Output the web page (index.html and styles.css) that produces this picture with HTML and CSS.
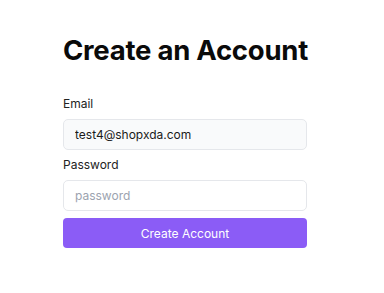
FILE: index.html
```html
<!DOCTYPE html>
<html lang="en">
<head>
    <meta charset="UTF-8">
    <meta name="viewport" content="width=device-width, initial-scale=1.0">
    <title>Create an Account</title>
    <link rel="stylesheet" href="styles.css">
</head>
<body>

    <main class="signup">
        <h1>Create an Account</h1>
        <form class="signup-form">
            <label for="email">Email</label>
            <input type="email" id="email" class="filled" value="test4@shopxda.com">

            <label for="password">Password</label>
            <input type="password" id="password" placeholder="password">

            <button type="submit">Create Account</button>
        </form>
    </main>

</body>
</html>
```

FILE: styles.css
```css
body {
    font-family: Inter, "Noto Sans", sans-serif;
    margin: 0;
    padding: 0;
    background: #ffffff;
    color: #111111;
}
.signup {
    width: 244px;
    padding: 33px 0 0 63px;
}
h1 {
    margin: 0;
    font-size: 27.5px;
    font-weight: 700;
    letter-spacing: -0.25px;
    color: #0a0a0a;
    line-height: 34px;
    white-space: nowrap;
}
.signup-form {
    display: flex;
    flex-direction: column;
    margin-top: 29px;
}
label {
    font-size: 12px;
    line-height: 16px;
    color: #222222;
    margin-bottom: 7px;
}
input {
    box-sizing: border-box;
    height: 31px;
    padding: 0 11px;
    font-family: inherit;
    font-size: 12px;
    color: #1a1a1a;
    border: 1px solid #e5e7eb;
    border-radius: 5px;
    background: #ffffff;
    margin-bottom: 7px;
    outline: none;
}
input::placeholder {
    color: #9ca3af;
}
input.filled {
    background: #f9fafb;
}
button {
    box-sizing: border-box;
    height: 30px;
    border: none;
    border-radius: 4px;
    background: #8b5cf6;
    color: #ffffff;
    font-family: inherit;
    font-size: 12px;
    cursor: pointer;
}
```
